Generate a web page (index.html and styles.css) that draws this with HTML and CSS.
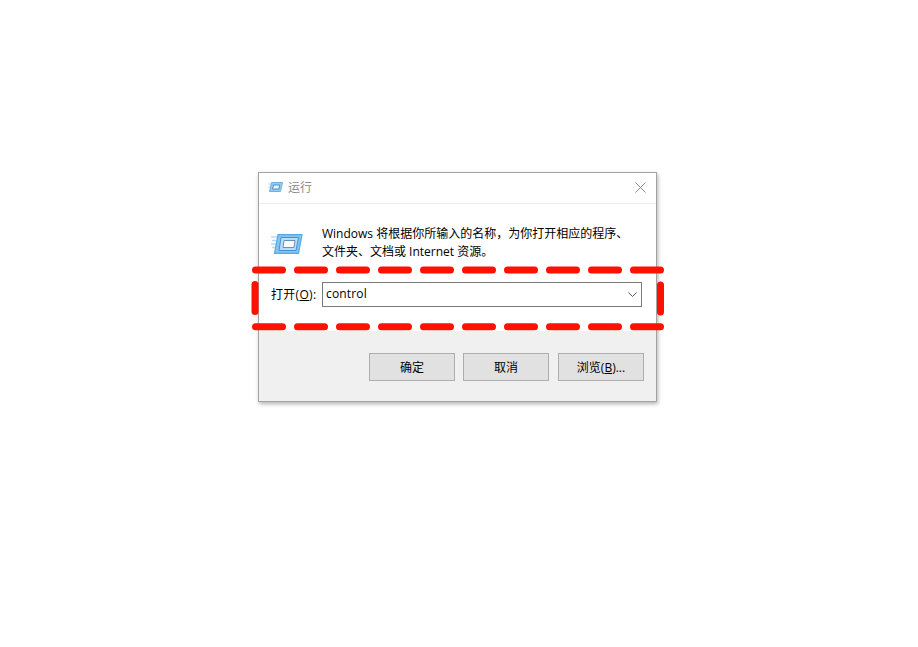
FILE: index.html
```html
<!DOCTYPE html>
<html lang="zh-CN">
<head>
  <meta charset="UTF-8" />
  <title>运行</title>
  <link rel="stylesheet" href="styles.css">
</head>
<body>
  <div class="dialog">
    <div class="titlebar">
      <svg class="title-icon" viewBox="0 0 15 10" width="15" height="10">
        <path d="M0 2H3M0 5H2" stroke="#b5dcf6" stroke-width="1" fill="none"/>
        <path d="M3.5 0.5H14.5L12.5 9.5H1.5Z" fill="#8fcaf1" stroke="#6bb4e8" stroke-width="1"/>
        <path d="M5.5 3H11.5L11 7H4.5Z" fill="#eef7fd" stroke="#5c8fbe" stroke-width="1"/>
      </svg>
      <span class="title">运行</span>
      <svg class="close" viewBox="0 0 11 11" width="11" height="11">
        <path d="M0.5 0.5L10.5 10.5M10.5 0.5L0.5 10.5" stroke="#8a8a8a" stroke-width="1" fill="none"/>
      </svg>
    </div>

    <div class="content">
      <div class="message-row">
        <svg class="run-icon" viewBox="0 0 32 20" width="32" height="20">
          <path d="M0 3H7M1 6.500H6M0 10H5M1 13.500H4" stroke="#b5dcf6" stroke-width="1.500" fill="none"/>
          <path d="M7 0.700H31L27.500 19.300H3.500Z" fill="#84c5f0" stroke="#58a9e6" stroke-width="1.200"/>
          <path d="M10 3.500H27.500L25 16.500H8Z" fill="#b9dff8" stroke="#3f94da" stroke-width="1"/>
          <path d="M13 6.500H24L23 13.500H12Z" fill="#f7fbff" stroke="#6f8fae" stroke-width="1"/>
        </svg>
        <p class="message">Windows 将根据你所输入的名称，为你打开相应的程序、<br>文件夹、文档或 Internet 资源。</p>
      </div>

      <div class="open-row">
        <label class="open-label">打开(<u>O</u>):</label>
        <div class="combo">
          <span class="combo-value">control</span>
          <svg class="combo-arrow" viewBox="0 0 9 5" width="9" height="5">
            <path d="M0.500 0.500L4.500 4.500L8.500 0.500" stroke="#555" stroke-width="1" fill="none"/>
          </svg>
        </div>
      </div>
    </div>

    <div class="footer">
      <button class="btn">确定</button>
      <button class="btn">取消</button>
      <button class="btn btn-browse">浏览(<u>B</u>)...</button>
    </div>
  </div>

  <svg class="marker" viewBox="0 0 918 647" width="918" height="647">
    <path d="M255.500 270H662" />
    <path d="M255.500 326.700H662" />
    <path d="M255 284.500V312" />
    <path d="M660.500 285V313" />
  </svg>
</body>
</html>
```

FILE: styles.css
```css
html, body {
  margin: 0;
  height: 100%;
}

body {
  position: relative;
  padding: 172px 0 0 258px;
  box-sizing: border-box;
  background: #fff;
  font-family: "Open Sans", "Noto Sans CJK SC", sans-serif;
  font-size: 12px;
  color: #000;
  overflow: hidden;
}

.dialog {
  width: 399px;
  height: 230px;
  box-sizing: border-box;
  display: flex;
  flex-direction: column;
  background: #fff;
  border: 1px solid #a3a3a3;
  box-shadow: 1px 2px 4px rgba(0, 0, 0, 0.3);
}

.titlebar {
  height: 31px;
  box-sizing: border-box;
  display: flex;
  align-items: center;
  padding: 0 10px 2px 9px;
  border-bottom: 1px solid #ececec;
}

.title-icon {
  margin-right: 5px;
}

.title {
  color: #8a8a8a;
  flex: 1;
}

.content {
  flex: 1;
  padding: 0 14px 0 12px;
}

.message-row {
  display: flex;
  align-items: center;
  height: 78px;
  box-sizing: border-box;
}

.run-icon {
  margin-top: 1px;
  margin-right: 19px;
}

.message {
  margin: 0;
  line-height: 18px;
  white-space: nowrap;
}

.open-row {
  display: flex;
  align-items: center;
}

.open-label {
  width: 51px;
  padding-bottom: 1px;
  letter-spacing: 0.3px;
}

.combo {
  flex: 1;
  height: 25px;
  box-sizing: border-box;
  display: flex;
  align-items: center;
  justify-content: space-between;
  padding: 0 4px 0 3px;
  border: 1px solid #7a7a7a;
}

.combo-value {
  padding-bottom: 2px;
  letter-spacing: 0.15px;
}

.footer {
  height: 70px;
  box-sizing: border-box;
  display: flex;
  justify-content: flex-end;
  gap: 8px;
  padding: 22px 12px 0 0;
  background: #f0f0f0;
}

.btn {
  width: 86px;
  height: 28px;
  padding: 0;
  border: 1px solid #adadad;
  background: #e1e1e1;
  font: inherit;
  color: #000;
}

.btn-browse {
  margin-left: 1px;
}

.marker {
  position: absolute;
  top: 0;
  left: 0;
}

.marker path {
  fill: none;
  stroke: #ff1100;
  stroke-width: 7;
  stroke-linecap: round;
  stroke-dasharray: 27 15;
}
```
